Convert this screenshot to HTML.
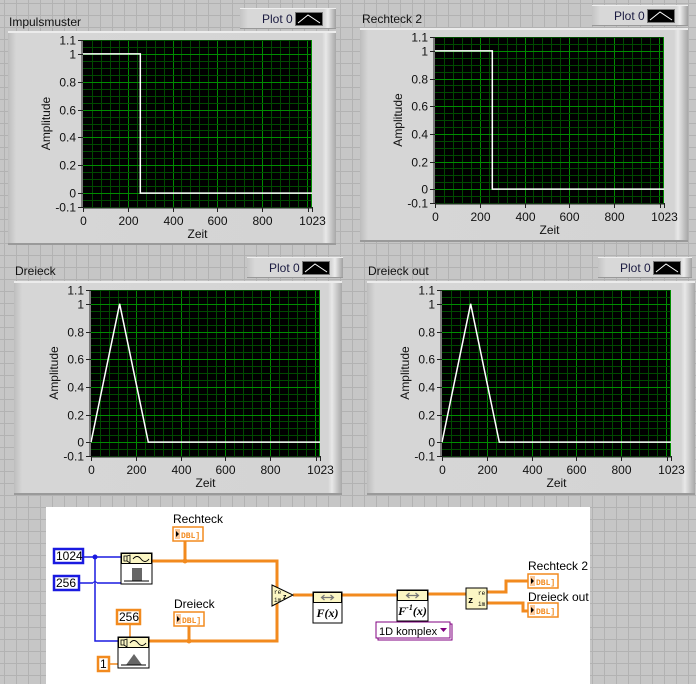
<!DOCTYPE html>
<html><head><meta charset="utf-8">
<style>
*{margin:0;padding:0;box-sizing:border-box}
body{width:696px;height:684px;overflow:hidden;position:relative;font-family:"Liberation Sans",sans-serif;font-size:12px;color:#000;
background-color:#c6c6c6;
background-image:linear-gradient(to right,#b2b2b2 1px,transparent 1px),linear-gradient(to bottom,#b2b2b2 1px,transparent 1px);
background-size:12px 12px;background-position:4px 3px;}
.abs{position:absolute}
.frame{position:absolute;background:linear-gradient(to right,#bdbdbd 0,#d6d6d6 8px,#d4d4d4 calc(100% - 14px),#e8e8e8 calc(100% - 10px),#a8a8a8 100%);border-top:2px solid #ececec;border-bottom:2px solid #9a9a9a;}
.leg{position:absolute;height:21px;background:linear-gradient(to right,#c4c4c4 0,#d8d8d8 8px,#d6d6d6 calc(100% - 12px),#ececec calc(100% - 8px),#a0a0a0 100%);border-top:1px solid #eee;border-bottom:1px solid #999}
.leg span{position:absolute;top:3px;font-size:12px;color:#1a1a40}
.sw{position:absolute;top:3px;width:28px;height:14px;background:#000;border:1px solid #777}
.lab{position:absolute;font-size:12px;color:#111}
</style></head><body>
<div id="root"></div>
<svg class="abs" style="left:0;top:0" width="696" height="684" id="diag"></svg>
<script>
var root=document.getElementById('root');
function r(v){return Math.round(v)+0.5}
function graph(o){
 var h='';
 h+='<div class="lab" style="left:'+o.lx+'px;top:'+o.ly+'px">'+o.name+'</div>';
 h+='<div class="frame" style="left:'+o.fx+'px;top:'+o.fy+'px;width:'+o.fw+'px;height:'+o.fh+'px"></div>';
 h+='<div class="leg" style="left:'+o.gx+'px;top:'+o.gy+'px;width:'+(o.gw||96)+'px"><span style="left:22px">Plot 0</span><div class="sw" style="left:55px"><svg width="26" height="12"><path d="M2 10 L12 2 L24 10" stroke="#fff" fill="none" stroke-width="1"/></svg></div></div>';
 var px=o.px,py=o.py,pw=o.pw,ph=o.ph;
 function X(v){return px+v/1023*pw}
 function Y(v){return py+(1.1-v)/1.2*ph}
 var s='<svg class="abs" style="left:0;top:0" width="696" height="684" shape-rendering="crispEdges">';
 s+='<rect x="'+px+'" y="'+py+'" width="'+pw+'" height="'+ph+'" fill="#000"/>';
 for(var v=40;v<1023;v+=40){var mj=v%200==0;s+='<line x1="'+r(X(v))+'" x2="'+r(X(v))+'" y1="'+py+'" y2="'+(py+ph)+'" stroke="'+(mj?'#008c00':'#004a00')+'" stroke-width="1"/>';}
 for(var k=-2;k<=22;k++){var v=k*0.05;var mj=k%4==0;s+='<line y1="'+r(Y(v))+'" y2="'+r(Y(v))+'" x1="'+px+'" x2="'+(px+pw)+'" stroke="'+(mj?'#008c00':'#004a00')+'"/>';}
 s+='<line x1="'+r(X(1023)-1)+'" x2="'+r(X(1023)-1)+'" y1="'+py+'" y2="'+(py+ph)+'" stroke="#008c00"/>';
 s+='<line x1="'+(px-1)+'" x2="'+(px-1)+'" y1="'+py+'" y2="'+(py+ph)+'" stroke="#222"/>';
 s+='<line x1="'+px+'" x2="'+(px+pw)+'" y1="'+(py+ph+1)+'" y2="'+(py+ph+1)+'" stroke="#222"/>';
 s+='</svg><svg class="abs" style="left:0;top:0" width="696" height="684">';
 var yl=[[1.1,'1.1'],[1,'1'],[0.8,'0.8'],[0.6,'0.6'],[0.4,'0.4'],[0.2,'0.2'],[0,'0'],[-0.1,'-0.1']];
 yl.forEach(function(a){var y=r(Y(a[0]));s+='<line x1="'+(px-5)+'" x2="'+px+'" y1="'+y+'" y2="'+y+'" stroke="#222"/><text x="'+(px-7)+'" y="'+(y+4)+'" text-anchor="end" font-size="12" font-family="Liberation Sans" fill="#111">'+a[1]+'</text>';});
 [0,200,400,600,800,1023].forEach(function(v){var x=r(X(v));s+='<line x1="'+x+'" x2="'+x+'" y1="'+(py+ph)+'" y2="'+(py+ph+5)+'" stroke="#222"/><text x="'+x+'" y="'+(py+ph+18)+'" text-anchor="middle" font-size="12" font-family="Liberation Sans" fill="#111">'+v+'</text>';});
 s+='<line x1="'+r(X(1023)-4)+'" x2="'+r(X(1023)-4)+'" y1="'+(py+ph)+'" y2="'+(py+ph+5)+'" stroke="#222"/>';
 s+='<text x="'+(px+pw/2)+'" y="'+(py+ph+31)+'" text-anchor="middle" font-size="12" font-family="Liberation Sans" fill="#111">Zeit</text>';
 var ay=py+ph/2;s+='<text transform="translate('+(px-33)+','+ay+') rotate(-90)" text-anchor="middle" font-size="12" font-family="Liberation Sans" fill="#111">Amplitude</text>';
 var d;
 if(o.t=='r') d='M'+X(0)+' '+Y(1)+' L'+X(256)+' '+Y(1)+' L'+X(256)+' '+Y(0)+' L'+X(1023)+' '+Y(0);
 else d='M'+X(0)+' '+Y(0)+' L'+X(128)+' '+Y(1)+' L'+X(256)+' '+Y(0)+' L'+X(1023)+' '+Y(0);
 s+='<path d="'+d+'" stroke="#fff" stroke-width="1.5" fill="none"/>';
 s+='</svg>';
 return h+s;
}
var H='';
H+=graph({name:'Impulsmuster',lx:9,ly:15,fx:8,fy:31,fw:328,fh:214,gx:240,gy:8,px:83,py:40,pw:229,ph:167,t:'r'});
H+=graph({name:'Rechteck 2',lx:362,ly:12,fx:360,fy:28,fw:328,fh:214,gx:592,gy:5,px:435,py:37,pw:229,ph:166,t:'r'});
H+=graph({name:'Dreieck',lx:15,ly:264,fx:14,fy:281,fw:328,fh:214,gx:247,gy:257,px:91,py:290,pw:229,ph:166,t:'t'});
H+=graph({name:'Dreieck out',lx:368,ly:264,fx:367,fy:281,fw:328,fh:214,gx:598,gy:257,gw:94,px:442,py:290,pw:229,ph:166,t:'t'});
root.innerHTML=H;
var O='#f28a1e',B='#1a1ae0';
function dbl(x,y){return '<rect x="'+x+'" y="'+y+'" width="30" height="14" fill="#fff" stroke="'+O+'" stroke-width="1.5"/><rect x="'+(x+2)+'" y="'+(y+2)+'" width="5" height="10" fill="#fbc99a"/><path d="M'+(x+3)+' '+(y+4)+' l3 3 l-3 3z" fill="#000"/><text x="'+(x+8)+'" y="'+(y+11)+'" font-size="8" font-weight="bold" font-family="Liberation Mono" fill="'+O+'">DBL]</text>'}
function cst(x,y,w,t,c){return '<rect x="'+x+'" y="'+y+'" width="'+w+'" height="14" fill="#fff" stroke="'+c+'" stroke-width="2.5"/><text x="'+(x+2)+'" y="'+(y+11)+'" font-size="12" font-family="Liberation Sans" fill="#000">'+t+'</text>'}
function fn(x,y,w,h,kind){var s='<rect x="'+x+'" y="'+y+'" width="'+w+'" height="'+h+'" fill="#fff" stroke="#000"/><rect x="'+(x+.5)+'" y="'+(y+.5)+'" width="'+(w-1)+'" height="10" fill="#fbf6c4" stroke="#000" stroke-width="1"/>';
 if(kind=='sq'){s+='<path d="M'+(x+3)+' '+(y+3)+'h3v5h-3z M'+(x+6)+' '+(y+3)+'l3 -1v8l-3 -2" fill="none" stroke="#000" stroke-width=".8"/><path d="M'+(x+12)+' '+(y+6)+'q4 -5 8 0t8 0" fill="none" stroke="#000"/><rect x="'+(x+11)+'" y="'+(y+15)+'" width="10" height="13" fill="#666"/><line x1="'+(x+3)+'" x2="'+(x+28)+'" y1="'+(y+28)+'" y2="'+(y+28)+'" stroke="#000"/>'}
 if(kind=='tr'){s+='<path d="M'+(x+3)+' '+(y+3)+'h3v5h-3z M'+(x+6)+' '+(y+3)+'l3 -1v8l-3 -2" fill="none" stroke="#000" stroke-width=".8"/><path d="M'+(x+12)+' '+(y+6)+'q4 -5 8 0t8 0" fill="none" stroke="#000"/><path d="M'+(x+8)+' '+(y+28)+'L'+(x+16)+' '+(y+17)+'L'+(x+24)+' '+(y+28)+'z" fill="#666"/><line x1="'+(x+3)+'" x2="'+(x+28)+'" y1="'+(y+28)+'" y2="'+(y+28)+'" stroke="#000"/>'}
 if(kind=='f'||kind=='fi'){var cx=x+w/2;s+='<path d="M'+(cx-6)+' '+(y+5.5)+'h12 M'+(cx-3)+' '+(y+3)+'l-3 2.5l3 2.5 M'+(cx+3)+' '+(y+3)+'l3 2.5l-3 2.5" stroke="#777" fill="none" stroke-width="1.2"/><text x="'+cx+'" y="'+(y+25)+'" text-anchor="middle" font-size="12" font-weight="bold" font-style="italic" font-family="Liberation Serif">'+(kind=='f'?'F(x)':'F<tspan font-size="8" dy="-5">-1</tspan><tspan dy="5">(x)</tspan>')+'</text>'}
 return s}
var d='<rect x="46" y="507" width="544" height="177" fill="#fff"/>';
d+='<path d="M83 557H121 M79 583H93 M97 583H121 M95 557V641H118" stroke="'+B+'" stroke-width="1.5" fill="none"/><path d="M93 583 q2 -3 4 0" stroke="'+B+'" fill="none"/><circle cx="95" cy="557" r="2.5" fill="'+B+'"/>';
d+='<path d="M152 561H277V590 M149 641H277V600 M185 561V541 M189 641V626 M293 595H313 M342 595H397 M428 594H466 M487 592H506V581H528 M487 603H523V611H528" stroke="'+O+'" stroke-width="3" fill="none"/>';
d+='<path d="M130 623V637 M109 664H118" stroke="'+O+'" stroke-width="1.5" fill="none"/>';
d+='<circle cx="185" cy="561" r="2.5" fill="'+O+'"/><circle cx="189" cy="641" r="2.5" fill="'+O+'"/>';
d+=cst(54,549,29,'1024',B)+cst(54,576,25,'256',B)+cst(117,610,23,'256',O)+cst(98,657,11,'1',O);
d+=fn(121,553,31,31,'sq')+fn(118,637,31,31,'tr')+fn(313,592,29,31,'f')+fn(397,590,31,31,'fi');
d+='<path d="M272 585L293 595L272 606z" fill="#fbf6c4" stroke="#000"/><text x="274" y="594" font-size="6" font-family="Liberation Mono">re</text><text x="274" y="602" font-size="6" font-family="Liberation Mono">im</text><text x="283" y="599" font-size="7" font-weight="bold">z</text>';
d+='<rect x="466" y="588" width="21" height="21" fill="#fbf6c4" stroke="#000"/><text x="468" y="603" font-size="9" font-weight="bold" font-family="Liberation Mono">z</text><text x="478" y="595" font-size="6" font-family="Liberation Mono">re</text><text x="478" y="606" font-size="6" font-family="Liberation Mono">im</text>';
d+='<rect x="378" y="624" width="74" height="16" fill="#fff" stroke="#800080"/><rect x="376" y="622" width="74" height="16" fill="#fff" stroke="#800080"/><text x="379" y="635" font-size="11" font-family="Liberation Sans">1D komplex</text><path d="M440 628h7l-3.5 4z" fill="#800080"/>';
d+=dbl(173,527)+dbl(174,612)+dbl(528,574)+dbl(528,603);
d+='<g font-size="12" font-family="Liberation Sans" fill="#000"><text x="173" y="523">Rechteck</text><text x="174" y="608">Dreieck</text><text x="528" y="570">Rechteck 2</text><text x="528" y="601">Dreieck out</text></g>';
document.getElementById('diag').innerHTML=d;
</script>
</body></html>
